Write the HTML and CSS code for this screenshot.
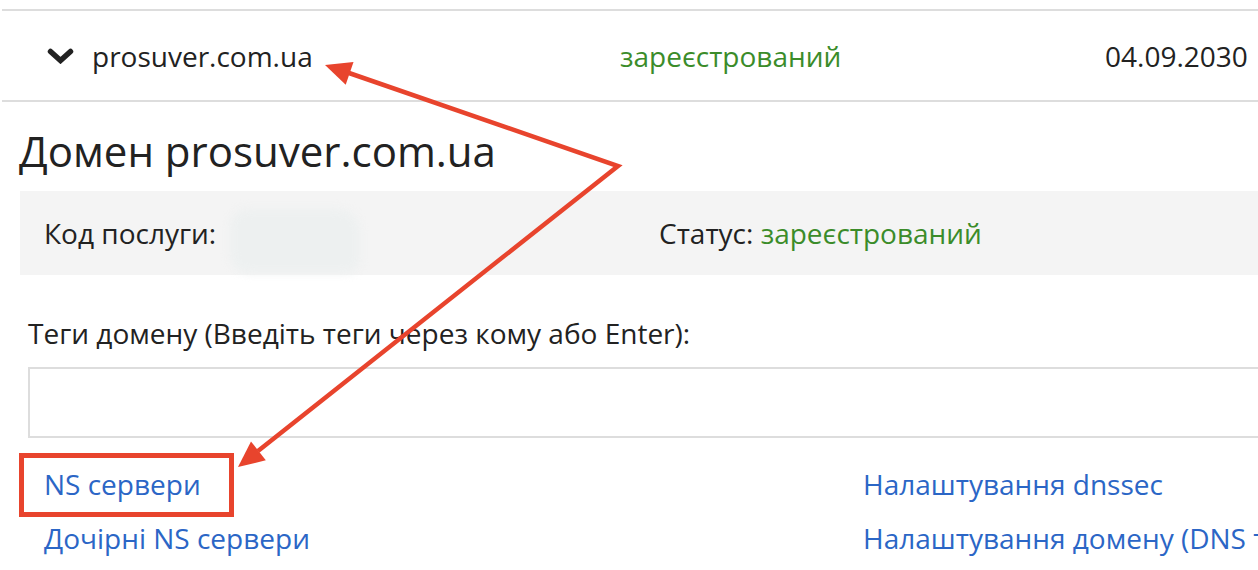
FILE: index.html
```html
<!DOCTYPE html>
<html lang="uk">
  <head>
    <meta charset="UTF-8" />
    <meta name="viewport" content="width=device-width, initial-scale=1.0" />
    <title>Домен prosuver.com.ua</title>
    <link rel="stylesheet" href="styles.css">
  </head>
  <body>
    <div class="domain-row">
      <div class="domain-name">
        <svg class="chevron" width="27" height="16" viewBox="0 0 27 16">
          <path d="M3.5 3.5 L13.5 12.5 L23.5 3.5" />
        </svg>
        <span>prosuver.com.ua</span>
      </div>
      <div class="domain-status">зареєстрований</div>
      <div class="domain-date">04.09.2030</div>
    </div>

    <section class="domain">
      <h1>Домен prosuver.com.ua</h1>

      <div class="info-box">
        <div class="info-cell">
          <span>Код послуги:</span>
          <span class="hidden-code"></span>
        </div>
        <div class="info-cell">
          <span>Статус:&nbsp;<span class="green">зареєстрований</span></span>
        </div>
      </div>

      <div class="tags">
        <label class="tags-label">Теги домену (Введіть теги через кому або Enter):</label>
        <div class="tags-input"></div>
      </div>

      <div class="links">
        <ul>
          <li><a href="#">NS сервери</a></li>
          <li><a href="#">Дочірні NS сервери</a></li>
        </ul>
        <ul>
          <li><a href="#">Налаштування dnssec</a></li>
          <li><a href="#">Налаштування домену (DNS та переадресація)</a></li>
        </ul>
      </div>
    </section>

    <!-- annotation -->
    <svg class="marks" width="1258" height="570" viewBox="0 0 1258 570">
      <polyline points="349,73 618,166 258,451" fill="none" stroke="#e8442d" stroke-width="4.5" stroke-linejoin="miter" />
      <polygon points="325,65 353.5,62 345.7,84.8" fill="#e8442d" />
      <polygon points="238,467 265.8,460.3 251,441.5" fill="#e8442d" />
      <rect x="21.5" y="455.5" width="210" height="59" fill="none" stroke="#e8442d" stroke-width="5" />
    </svg>
  </body>
</html>
```

FILE: styles.css
```css
body {
  margin: 0px;
  font-family: "Open Sans", "Noto Sans", sans-serif;
  font-size: 28px;
  color: #222;
  background-color: #fff;
  overflow: hidden;
  width: 1258px;
  height: 570px;
  position: relative;
}

.domain-row {
  margin: 9px 0px 0px 2px;
  border-top: 2px solid #ddd;
  border-bottom: 2px solid #ddd;
  height: 89px;
  display: grid;
  grid-template-columns: 618px 485px 1fr;
  align-items: center;
  white-space: nowrap;
}

.domain-name {
  display: flex;
  align-items: center;
  padding-left: 45px;
  gap: 18px;
}

.chevron path {
  fill: none;
  stroke: #222;
  stroke-width: 5.5;
  stroke-linecap: round;
}

.domain-status,
.green {
  color: #3b8c2a;
}

.domain {
  padding-left: 20px;
  width: 1300px;
}

h1 {
  font-weight: 400;
  font-size: 42px;
  line-height: 48px;
  margin: 25px 0px 16px -1px;
}

.info-box {
  background-color: #f4f4f4;
  height: 84px;
  padding-left: 24px;
  display: grid;
  grid-template-columns: 615px 1fr;
}

.info-cell {
  display: flex;
  align-items: center;
}

.hidden-code {
  align-self: flex-end;
  width: 130px;
  height: 64px;
  margin-left: 14px;
  margin-bottom: 2px;
  background-color: #edf0f0;
  border-radius: 18px 22px 14px 20px;
  filter: blur(4px);
}

.tags {
  padding: 0px 8px;
  margin-top: 38px;
}

.tags-label {
  display: block;
  line-height: 40px;
}

.tags-input {
  margin-top: 14px;
  height: 67px;
  border: 2px solid #ddd;
}

.links {
  display: grid;
  grid-template-columns: 819px 1fr;
  padding-left: 24px;
  margin-top: 19px;
  white-space: nowrap;
}

.links ul {
  list-style: none;
  margin: 0px;
  padding: 0px;
}

.links li {
  line-height: 54px;
}

.links a {
  color: #2b66c6;
  text-decoration: none;
}

.marks {
  position: absolute;
  left: 0px;
  top: 0px;
  pointer-events: none;
}
```
